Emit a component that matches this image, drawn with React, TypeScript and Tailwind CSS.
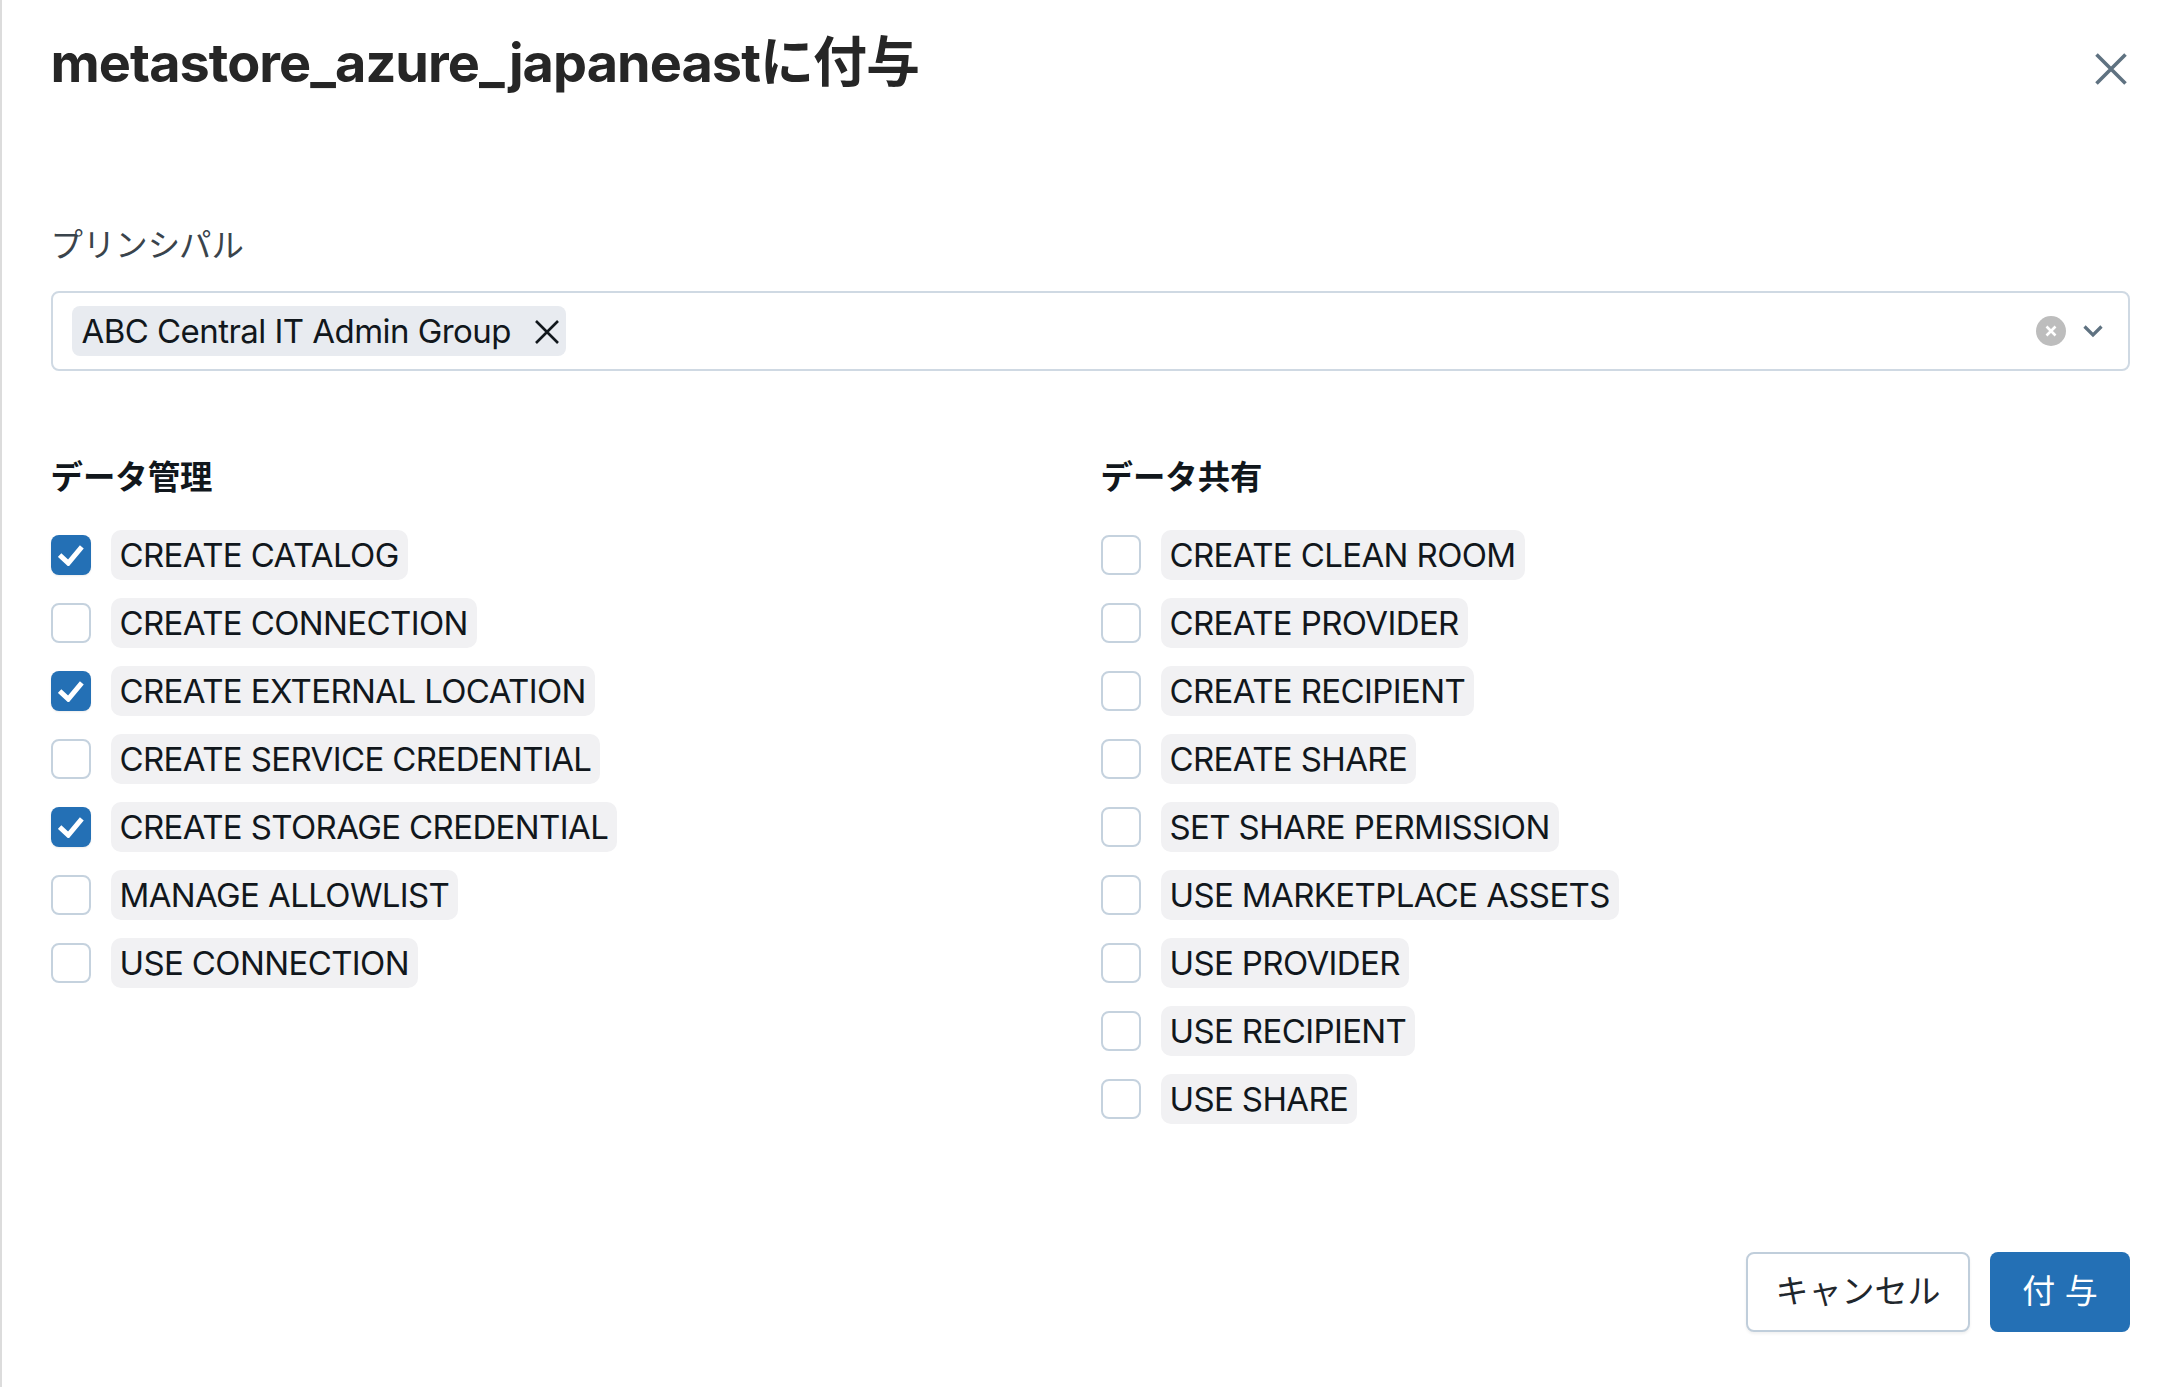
import React from 'react';

const FONT = "font-['Inter','Noto_Sans_CJK_JP',sans-serif]";

const dataManagement = [
  { name: 'CREATE CATALOG', checked: true },
  { name: 'CREATE CONNECTION', checked: false },
  { name: 'CREATE EXTERNAL LOCATION', checked: true },
  { name: 'CREATE SERVICE CREDENTIAL', checked: false },
  { name: 'CREATE STORAGE CREDENTIAL', checked: true },
  { name: 'MANAGE ALLOWLIST', checked: false },
  { name: 'USE CONNECTION', checked: false },
];

const dataSharing = [
  'CREATE CLEAN ROOM',
  'CREATE PROVIDER',
  'CREATE RECIPIENT',
  'CREATE SHARE',
  'SET SHARE PERMISSION',
  'USE MARKETPLACE ASSETS',
  'USE PROVIDER',
  'USE RECIPIENT',
  'USE SHARE',
].map(name => ({ name, checked: false }));

const Privilege: React.FC<{ name: string; checked: boolean }> = ({ name, checked }) => (
  <div className="flex items-center h-[50px] gap-[20px]">
    {checked ? (
      <span className="w-[40px] h-[40px] rounded-[8px] bg-[#2470b5] flex items-center justify-center shadow-[0_1px_2px_rgba(0,0,0,0.08)]">
        <svg width="26" height="22" viewBox="0 0 24 20" fill="none">
          <path d="M1.5 10 L9.5 17.5 L22 2.5" stroke="#fff" strokeWidth="4.6" />
        </svg>
      </span>
    ) : (
      <span className="w-[40px] h-[40px] rounded-[8px] bg-white border-2 border-[#c5d2de]" />
    )}
    <span className="h-[50px] px-[9px] rounded-[10px] bg-[#f1f1f3] text-[#11171c] text-[33px] leading-[50px] tracking-[-0.62px]">
      {name}
    </span>
  </div>
);

const Column: React.FC<{ title: string; items: { name: string; checked: boolean }[] }> = ({ title, items }) => (
  <div>
    <h2 className="h-[40px] mb-[32px] text-[32.4px] leading-[40px] font-bold text-[#11171c]">{title}</h2>
    <div className="flex flex-col gap-[18px]">
      {items.map(item => (
        <Privilege key={item.name} {...item} />
      ))}
    </div>
  </div>
);

const App: React.FC = () => {
  return (
    <div className={`${FONT} h-screen bg-white border-l-2 border-[#dcdcdc] pl-[48.5px] pr-[50px] flex flex-col overflow-hidden`}>
      <div className="flex items-start justify-between pt-[27px] h-[222px]">
        <h1 className="text-[54px] leading-[72px] font-bold text-[#262626] tracking-[-0.95px]">
          metastore_azure_japaneastに付与
        </h1>
        <button className="mt-[25px] mr-[2px] text-[#5f7281]">
          <svg width="34" height="34" viewBox="0 0 34 34" fill="none">
            <path d="M2.5 2.5 L31.5 31.5 M31.5 2.5 L2.5 31.5" stroke="currentColor" strokeWidth="3.6" />
          </svg>
        </button>
      </div>

      <label className="h-[40px] mb-[29px] text-[32.4px] leading-[48px] text-[#3a444c]">プリンシパル</label>

      <div className="h-[80px] shrink-0 border-2 border-[#cfd9e3] rounded-[8px] flex items-center pl-[19px] pr-[25px]">
        <span className="h-[50px] flex items-center pt-[1px] pl-[10px] pr-[5px] rounded-[8px] bg-[#e8ebf0] text-[#11171c] text-[33px] tracking-[-0.55px]">
          ABC Central IT Admin Group
          <svg className="ml-[22px]" width="28" height="28" viewBox="0 0 28 28" fill="none">
            <path d="M3 3 L25 25 M25 3 L3 25" stroke="#11171c" strokeWidth="2.6" />
          </svg>
        </span>
        <span className="ml-auto w-[30px] h-[30px] rounded-full bg-[#bdbdbd] flex items-center justify-center">
          <svg width="12" height="12" viewBox="0 0 12 12" fill="none">
            <path d="M1.5 1.5 L10.5 10.5 M10.5 1.5 L1.5 10.5" stroke="#fff" strokeWidth="2.6" />
          </svg>
        </span>
        <svg className="ml-[17px]" width="20" height="14" viewBox="0 0 20 14" fill="none">
          <path d="M1.5 2.5 L10 11 L18.5 2.5" stroke="#5f7281" strokeWidth="3.2" />
        </svg>
      </div>

      <div className="grid grid-cols-[1050px_1fr] mt-[87px]">
        <Column title="データ管理" items={dataManagement} />
        <Column title="データ共有" items={dataSharing} />
      </div>

      <div className="mt-auto pb-[55px] flex justify-end gap-[20px]">
        <button className="w-[224px] h-[80px] rounded-[8px] bg-white border-2 border-[#c0cedb] shadow-[0_2px_3px_rgba(0,0,0,0.06)] text-[33px] text-[#1f272d]">
          キャンセル
        </button>
        <button className="w-[140px] h-[80px] rounded-[8px] bg-[#2470b5] text-[33px] text-white">
          付 与
        </button>
      </div>
    </div>
  );
};

export default App;
